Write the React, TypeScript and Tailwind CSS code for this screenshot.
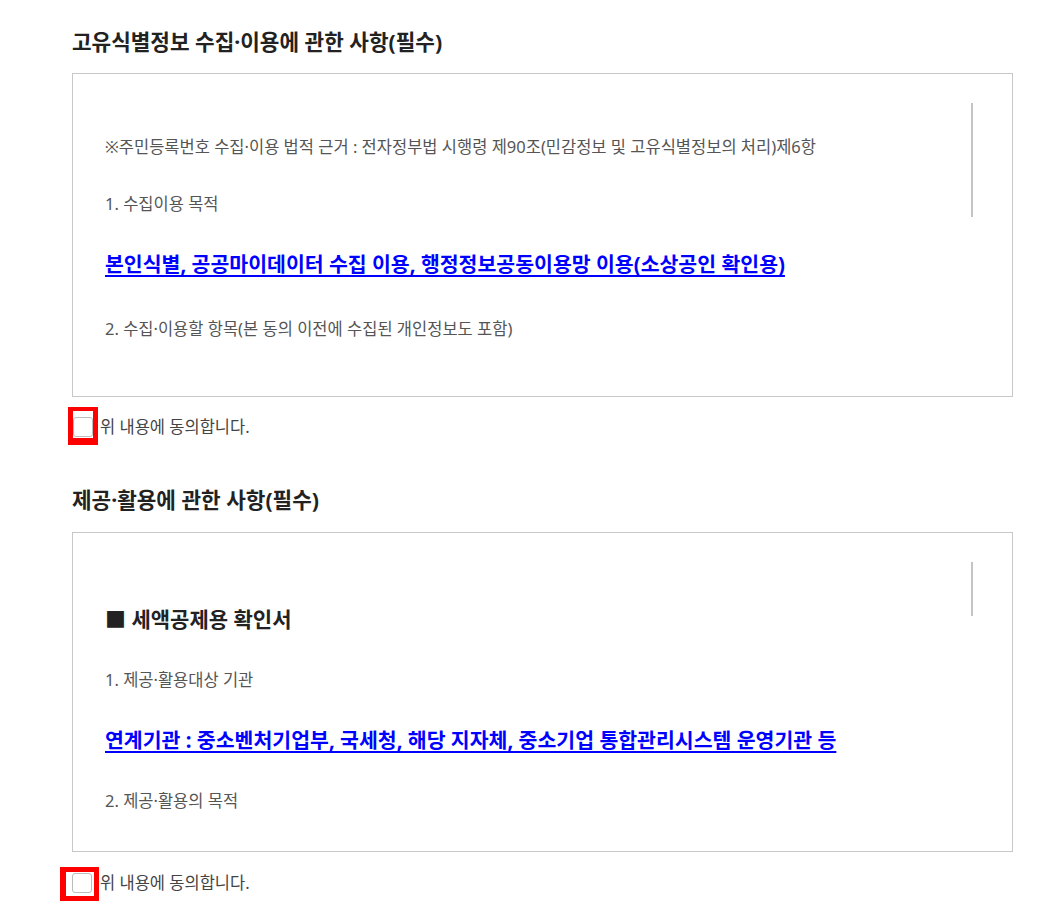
import React from "react";

function Check({ overlay }: { overlay: "a" | "b" }) {
  return (
    <span
      className={
        overlay === "a"
          ? "relative ml-[1px] block h-[20px] w-[20px] shrink-0"
          : "relative block h-[20px] w-[20px] shrink-0"
      }
    >
      <span className="block h-[20px] w-[20px] rounded-[3px] border border-[#bcbcbc] bg-white" />
      {overlay === "a" ? (
        <span className="absolute left-[-5px] top-[-10px] h-[38px] w-[30px] border-x-[5px] border-t-[4px] border-b-[7px] border-[#ff0000]" />
      ) : (
        <span className="absolute left-[-12px] top-[-6px] h-[34px] w-[39px] border-[5px] border-l-[6px] border-[#ff0000]" />
      )}
    </span>
  );
}

export default function App() {
  return (
    <div className="min-h-[910px] w-[1059px] bg-white pl-[72px] pt-[28px] font-['Noto_Sans','Noto_Sans_CJK_KR',sans-serif]">
      <h2 className="text-[21.3px] font-bold leading-[28px] text-[#222]">
        고유식별정보 수집·이용에 관한 사항(필수)
      </h2>
      <div className="relative mt-[17px] h-[324px] w-[941px] overflow-hidden border border-[#c8c8c8] bg-white">
        <div className="pl-[32px] pt-[62px] pr-[40px]">
          <p className="whitespace-nowrap text-[16.5px] leading-[22px] text-[#555]">
            ※주민등록번호 수집·이용 법적 근거 : 전자정부법 시행령 제90조(민감정보 및 고유식별정보의 처리)제6항
          </p>
          <p className="mt-[35px] text-[16.5px] leading-[22px] text-[#555]">1. 수집이용 목적</p>
          <p className="mt-[35px] whitespace-nowrap text-[20.5px] font-bold leading-[28px] text-[#0000ff] underline underline-offset-[3px]">
            본인식별, 공공마이데이터 수집 이용, 행정정보공동이용망 이용(소상공인 확인용)
          </p>
          <p className="mt-[40px] text-[16.5px] leading-[22px] text-[#555]">
            2. 수집·이용할 항목(본 동의 이전에 수집된 개인정보도 포함)
          </p>
        </div>
        <div className="absolute left-[898px] top-[29px] h-[114px] w-[2px] bg-[#c4c4c4]" />
      </div>
      <div className="mt-[20px] flex items-center">
        <Check overlay="a" />
        <span className="ml-[7px] text-[16.5px] leading-[20px] text-[#444]">위 내용에 동의합니다.</span>
      </div>

      <h2 className="mt-[49px] text-[21.3px] font-bold leading-[28px] text-[#222]">
        제공·활용에 관한 사항(필수)
      </h2>
      <div className="relative mt-[18px] h-[320px] w-[941px] overflow-hidden border border-[#c8c8c8] bg-white">
        <div className="pl-[32px] pt-[72px] pr-[40px]">
          <p className="text-[21px] font-bold leading-[28px] text-[#222]">■ 세액공제용 확인서</p>
          <p className="mt-[36px] text-[16.5px] leading-[22px] text-[#555]">1. 제공·활용대상 기관</p>
          <p className="mt-[35px] whitespace-nowrap text-[20.5px] font-bold leading-[28px] text-[#0000ff] underline underline-offset-[3px]">
            연계기관 : 중소벤처기업부, 국세청, 해당 지자체, 중소기업 통합관리시스템 운영기관 등
          </p>
          <p className="mt-[36px] text-[16.5px] leading-[22px] text-[#555]">2. 제공·활용의 목적</p>
        </div>
        <div className="absolute left-[898px] top-[29px] h-[54px] w-[2px] bg-[#c4c4c4]" />
      </div>
      <div className="mt-[21px] flex items-center">
        <Check overlay="b" />
        <span className="ml-[8px] text-[16.5px] leading-[20px] text-[#444]">위 내용에 동의합니다.</span>
      </div>
    </div>
  );
}
